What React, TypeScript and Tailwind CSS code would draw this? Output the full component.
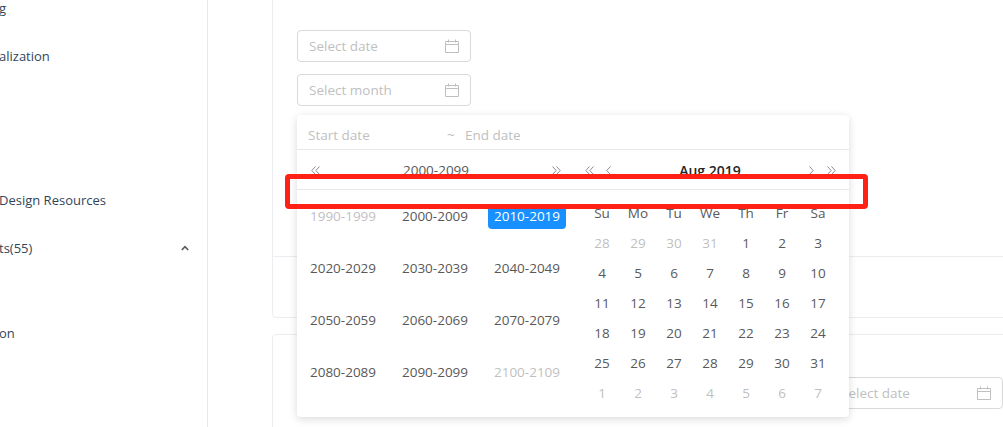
import React from 'react';

const decades = [
  ['1990-1999', '2000-2009', '2010-2019'],
  ['2020-2029', '2030-2039', '2040-2049'],
  ['2050-2059', '2060-2069', '2070-2079'],
  ['2080-2089', '2090-2099', '2100-2109'],
];

const weekDays = ['Su', 'Mo', 'Tu', 'We', 'Th', 'Fr', 'Sa'];

const days = [
  [28, 29, 30, 31, 1, 2, 3],
  [4, 5, 6, 7, 8, 9, 10],
  [11, 12, 13, 14, 15, 16, 17],
  [18, 19, 20, 21, 22, 23, 24],
  [25, 26, 27, 28, 29, 30, 31],
  [1, 2, 3, 4, 5, 6, 7],
];

const CalendarIcon = () => (
  <svg width="14" height="14" viewBox="0 0 14 14" fill="none" stroke="#bfbfbf" strokeWidth="1" className="shrink-0">
    <path d="M.5 2.5h13v11H.5zM.5 5.5h13M3.5 .5v3M10.5 .5v3" />
  </svg>
);

const Chevron = ({ dir, double }: { dir: 'left' | 'right'; double?: boolean }) => (
  <svg width="9" height="9" viewBox="0 0 9 9" fill="none" stroke="#8c8c8c" strokeWidth="1">
    {dir === 'left' ? (
      <>
        <path d={double ? 'M4.5 .5 .8 4.5l3.7 4' : 'M6.5 .5 2.8 4.5l3.7 4'} />
        {double && <path d="M8.5 .5 4.8 4.5l3.7 4" />}
      </>
    ) : (
      <>
        <path d={double ? 'M.5 .5l3.7 4-3.7 4' : 'M2.5 .5l3.7 4-3.7 4'} />
        {double && <path d="M4.5 .5l3.7 4-3.7 4" />}
      </>
    )}
  </svg>
);

const DateInput = ({ placeholder, className }: { placeholder: string; className: string }) => (
  <div className={`flex h-8 items-center justify-between rounded border border-[#d9d9d9] bg-white px-[11px] text-[13.5px] text-[#bfbfbf] ${className}`}>
    <span>{placeholder}</span>
    <CalendarIcon />
  </div>
);

const SidebarRow = ({ label, children }: { label: string; children?: React.ReactNode }) => (
  <div className="flex h-12 items-center justify-between pr-[18px] text-[#314659]">
    <span className="-ml-px">{label}</span>
    {children}
  </div>
);

const DecadePanel = () => (
  <div className="w-[276px]">
    <div className="flex h-10 items-center justify-between border-b border-[#e8e8e8] pl-[14px] pr-[12px] pt-[2px] text-[#595959]">
      <Chevron dir="left" double />
      <span>2000-2099</span>
      <Chevron dir="right" double />
    </div>
    <div className="grid grid-cols-3 pt-[15px]">
      {decades.flat().map((d, i) => (
        <div key={d} className="flex h-[52px] justify-center">
          <span
            className={
              'h-6 w-[78px] rounded-sm text-center leading-[22px] ' +
              (d === '2010-2019'
                ? 'bg-[#1890ff] text-white'
                : i === 0 || i === 11
                  ? 'text-[#bfbfbf]'
                  : 'text-[#595959]')
            }
          >
            {d}
          </span>
        </div>
      ))}
    </div>
  </div>
);

const MonthPanel = () => (
  <div className="w-[276px]">
    <div className="flex h-10 items-center border-b border-[#e8e8e8] pl-[12px] pr-[13px] pt-[2px] text-[#262626]">
      <Chevron dir="left" double />
      <span className="ml-[10px] flex">
        <Chevron dir="left" />
      </span>
      <span className="flex-1 text-center text-[14px] font-semibold">Aug 2019</span>
      <span className="mr-[11px] flex">
        <Chevron dir="right" />
      </span>
      <Chevron dir="right" double />
    </div>
    <div className="pl-[11px] pt-[8px]">
      <div className="grid h-[30px] w-[252px] grid-cols-7 text-center text-[#595959]">
        {weekDays.map((w) => (
          <span key={w} className="leading-[30px]">
            {w}
          </span>
        ))}
      </div>
      <div className="grid w-[252px] grid-cols-7 text-center">
        {days.flat().map((d, i) => (
          <span key={i} className={`h-[30px] leading-[30px] ${i < 4 || i > 34 ? 'text-[#bfbfbf]' : 'text-[#595959]'}`}>
            {d}
          </span>
        ))}
      </div>
    </div>
  </div>
);

export default function App() {
  return (
    <div className="relative flex h-[427px] w-[1003px] overflow-hidden bg-white font-['Open_Sans',sans-serif] text-[13px]">
      <aside className="w-[208px] shrink-0 border-r border-[#e8e8e8]">
        <div className="-mt-[15px]">
          <SidebarRow label="g" />
          <SidebarRow label="alization" />
          <SidebarRow label="" />
          <SidebarRow label="" />
          <SidebarRow label="Design Resources" />
          <SidebarRow label="ts(55)">
            <svg width="8" height="6" viewBox="0 0 8 6" fill="none" stroke="#595959" strokeWidth="1.6" className="mb-[2px]">
              <path d="M.8 5 4 1.6 7.2 5" />
            </svg>
          </SidebarRow>
          <div className="mt-[37px]">
            <SidebarRow label="on" />
          </div>
        </div>
      </aside>

      <main className="min-w-0 flex-1 overflow-hidden pl-16">
        <section className="-mt-[100px] mr-[-20px] h-[418px] rounded border border-[#ebedf0] pl-6 pt-[129px]">
          <DateInput placeholder="Select date" className="w-[174px]" />
          <DateInput placeholder="Select month" className="mt-3 w-[174px]" />
          <div className="-ml-6 mt-[150px] border-t border-[#ebedf0]" />
        </section>
        <section className="mt-4 mr-[-20px] h-[120px] rounded border border-[#ebedf0] pt-[42px]">
          <div className="flex justify-end pr-[19px]">
            <DateInput placeholder="Select date" className="w-[174px]" />
          </div>
        </section>
      </main>

      {/* open range picker */}
      <div className="absolute left-[297px] top-[115px] h-[302px] w-[552px] rounded bg-white text-[13.5px] shadow-[0_2px_8px_rgba(0,0,0,0.15)]">
        <div className="flex h-[35px] items-center border-b border-[#e8e8e8] pl-[11px] pt-1.5 text-[#bfbfbf]">
          <span className="w-[139px]">Start date</span>
          <span className="w-[18px]">~</span>
          <span>End date</span>
        </div>
        <div className="flex">
          <DecadePanel />
          <MonthPanel />
        </div>
      </div>

      {/* red annotation box */}
      <div className="absolute left-[285px] top-[174px] h-[35px] w-[583px] rounded border-[5px] border-[#ff2115]" />
    </div>
  );
}
